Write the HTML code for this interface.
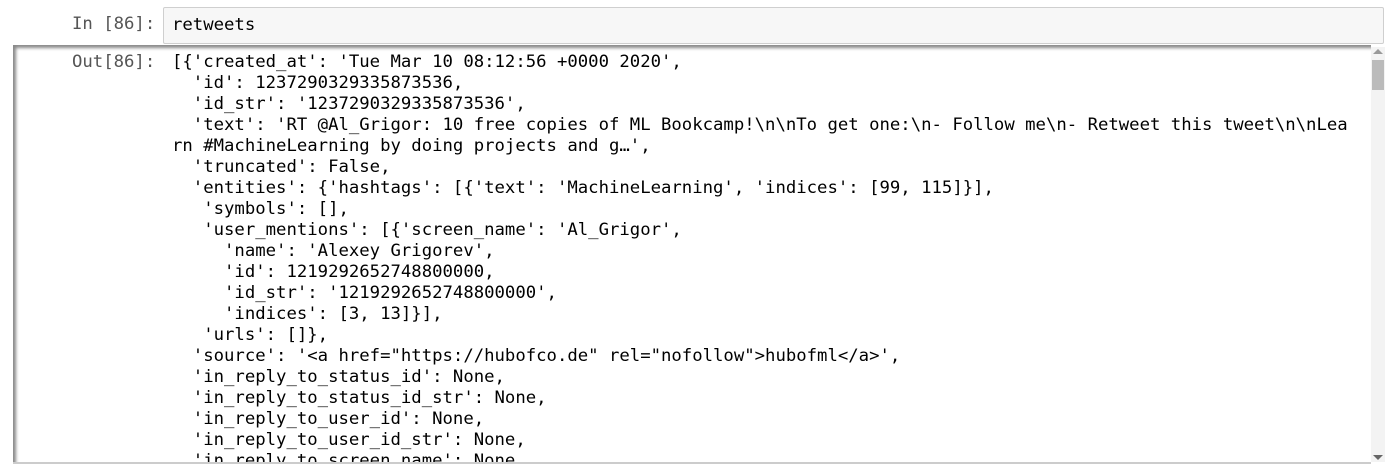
<!DOCTYPE html>
<html><head><meta charset="utf-8"><style>
html,body{margin:0;padding:0;background:#fff;width:1395px;height:472px;overflow:hidden;}
body{font-family:"DejaVu Sans Mono","Liberation Mono",monospace;font-size:17.3px;}
.inp{position:absolute;left:72px;top:14px;color:#555;}
.ibox{position:absolute;left:163px;top:7px;width:1221px;height:37px;background:#f7f7f7;border:1px solid #cfcfcf;border-radius:2px;box-sizing:border-box;}
.ibox span{position:absolute;left:8px;top:7px;color:#000;}
.obox{position:absolute;left:13px;top:45px;width:1358px;height:419px;box-shadow:inset 3px 3px 3px #888;border-bottom:1px solid #ddd;overflow:hidden;}
.out{position:absolute;left:72px;top:52px;color:#555;line-height:21px;}
pre{position:absolute;left:172px;top:52px;margin:0;font:inherit;line-height:21px;color:#000;white-space:pre;}
.sb{position:absolute;left:1371px;top:47px;width:14px;height:415px;background:#f3f3f3;}
.thumb{position:absolute;left:1372px;top:60px;width:12px;height:30px;background:#bbb;}
.up{position:absolute;left:1373px;top:49px;width:0;height:0;border-left:5px solid transparent;border-right:5px solid transparent;border-bottom:5px solid #999;}
.dn{position:absolute;left:1373px;top:455px;width:0;height:0;border-left:5px solid transparent;border-right:5px solid transparent;border-top:5px solid #666;}
</style></head><body>
<div class="inp">In [86]:</div>
<div class="ibox"><span>retweets</span></div>
<div class="obox"></div>
<div class="out">Out[86]:</div>
<pre>[{'created_at': 'Tue Mar 10 08:12:56 +0000 2020',
  'id': 1237290329335873536,
  'id_str': '1237290329335873536',
  'text': 'RT @Al_Grigor: 10 free copies of ML Bookcamp!\n\nTo get one:\n- Follow me\n- Retweet this tweet\n\nLea
rn #MachineLearning by doing projects and g…',
  'truncated': False,
  'entities': {'hashtags': [{'text': 'MachineLearning', 'indices': [99, 115]}],
   'symbols': [],
   'user_mentions': [{'screen_name': 'Al_Grigor',
     'name': 'Alexey Grigorev',
     'id': 1219292652748800000,
     'id_str': '1219292652748800000',
     'indices': [3, 13]}],
   'urls': []},
  'source': '&lt;a href="https://hubofco.de" rel="nofollow"&gt;hubofml&lt;/a&gt;',
  'in_reply_to_status_id': None,
  'in_reply_to_status_id_str': None,
  'in_reply_to_user_id': None,
  'in_reply_to_user_id_str': None,
  'in_reply_to_screen_name': None,</pre>
<div style="position:absolute;left:0;top:463px;width:1395px;height:9px;background:#fff"></div>
<div style="position:absolute;left:13px;top:462px;width:1358px;height:2px;background:#ccc"></div>
<div class="sb"></div><div class="thumb"></div><div class="up"></div><div class="dn"></div>
</body></html>
